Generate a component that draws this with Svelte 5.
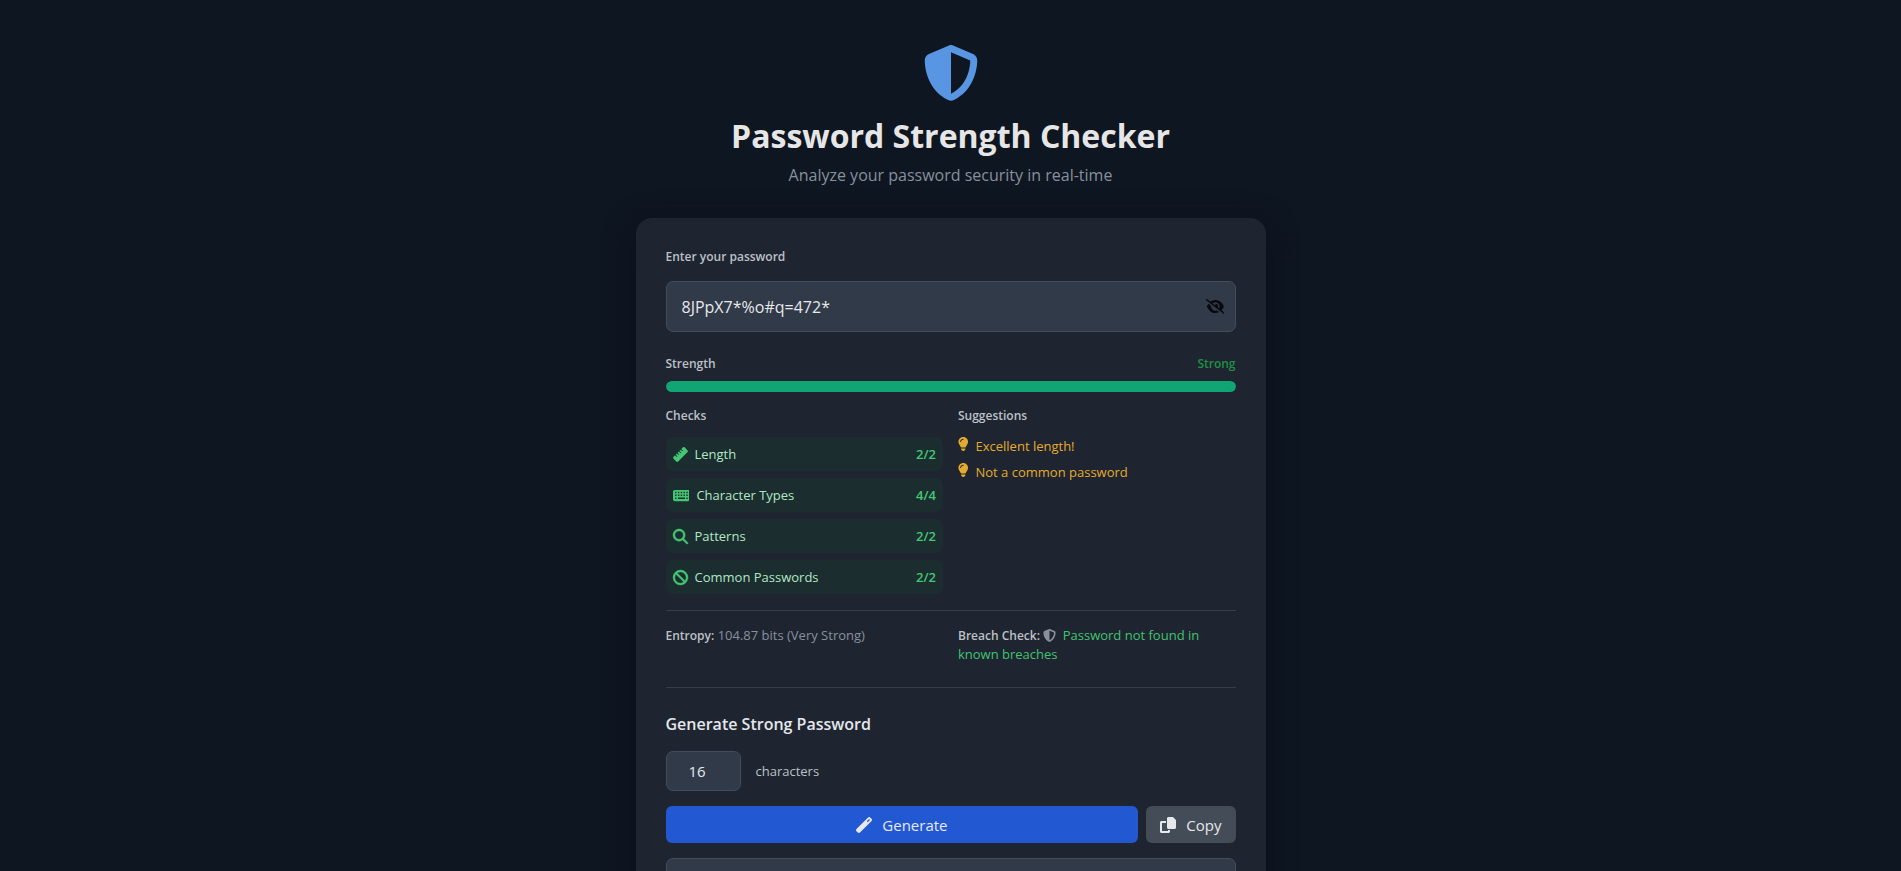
<script>
  let password = $state('8JPpX7*%o#q=472*');
  let length = $state(16);
  let generated = $state('');

  const icons = {
    shield: { w: 512, d: 'M256 0c4.600 0 9.200 1 13.400 2.900L457.700 82.800c22 9.300 38.400 31 38.300 57.200c-.5 99.200-41.300 280.700-213.600 363.200c-16.700 8-36.100 8-52.800 0C57.300 420.700 16.500 239.200 16 140c-.1-26.200 16.300-47.900 38.300-57.200L242.700 2.900C246.800 1 251.400 0 256 0zm0 66.800V444.800C394 378 431.100 230.100 432 141.400L256 66.800z' },
    eye: { w: 640, d: 'M38.800 5.100C28.400-3.100 13.300-1.200 5.100 9.200S-1.200 34.700 9.200 42.900l592 464c10.400 8.200 25.500 6.300 33.700-4.100s6.300-25.500-4.100-33.700L525.600 386.700c39.600-40.600 66.400-86.100 79.900-118.400c3.300-7.900 3.300-16.700 0-24.600c-14.900-35.700-46.200-87.700-93-131.100C465.500 68.800 400.800 32 320 32c-68.200 0-125 26.300-169.300 60.800L38.800 5.100zM223.100 149.500C248.600 126.200 282.700 112 320 112c79.500 0 144 64.500 144 144c0 24.900-6.300 48.300-17.400 68.700L408 294.500c8.400-19.300 10.600-41.400 4.800-63.300c-11.100-41.500-47.800-69.400-88.600-71.100c-5.800-.2-9.200 6.100-7.400 11.700c2.100 6.400 3.300 13.200 3.300 20.300c0 10.200-2.400 19.800-6.600 28.300l-90.300-70.800zM373 389.900c-16.400 6.500-34.300 10.100-53 10.100c-79.500 0-144-64.500-144-144c0-6.900 .5-13.600 1.400-20.200L83.100 161.500C60.300 191.200 44 220.800 34.500 243.700c-3.300 7.900-3.300 16.700 0 24.600c14.900 35.700 46.200 87.700 93 131.100C174.500 443.200 239.200 480 320 480c47.800 0 89.900-12.900 126.200-32.500L373 389.900z' },
    ruler: { w: 512, d: 'M177.900 494.100c-18.700 18.700-49.100 18.700-67.900 0L17.900 401.900c-18.700-18.700-18.700-49.100 0-67.900l50.700-50.700 48 48c6.200 6.200 16.400 6.200 22.600 0s6.200-16.400 0-22.600l-48-48 41.400-41.400 48 48c6.200 6.200 16.400 6.200 22.600 0s6.200-16.400 0-22.600l-48-48 41.400-41.400 48 48c6.200 6.200 16.400 6.200 22.600 0s6.200-16.400 0-22.600l-48-48 41.400-41.400 48 48c6.200 6.200 16.400 6.200 22.600 0s6.200-16.400 0-22.600l-48-48 50.700-50.700c18.700-18.700 49.100-18.700 67.900 0l92.100 92.100c18.700 18.700 18.700 49.100 0 67.900L177.900 494.100z' },
    keyboard: { w: 576, d: 'M64 64C28.700 64 0 92.700 0 128V384c0 35.300 28.700 64 64 64H512c35.300 0 64-28.700 64-64V128c0-35.300-28.700-64-64-64H64zM72 128h48v48H72zM72 224h48v48H72zM72 328h48v48H72zM168 128h48v48h-48zM168 224h48v48h-48zM168 328h240v48H168zM264 128h48v48h-48zM264 224h48v48h-48zM360 128h48v48h-48zM360 224h48v48h-48zM456 128h48v48h-48zM456 224h48v48h-48zM456 328h48v48h-48z' },
    search: { w: 512, d: 'M416 208c0 45.900-14.900 88.300-40 122.700L502.600 457.400c12.500 12.500 12.500 32.800 0 45.300s-32.800 12.500-45.300 0L330.700 376c-34.400 25.200-76.800 40-122.700 40C93.100 416 0 322.900 0 208S93.100 0 208 0S416 93.100 416 208zM208 352a144 144 0 1 0 0-288 144 144 0 1 0 0 288z' },
    ban: { w: 512, d: 'M367.200 412.500L99.500 144.800C77.100 176.100 64 214.500 64 256c0 106 86 192 192 192c41.500 0 79.900-13.100 111.200-35.500zm45.300-45.300C434.900 335.900 448 297.500 448 256c0-106-86-192-192-192c-41.500 0-79.900 13.100-111.200 35.500L412.500 367.200zM0 256a256 256 0 1 1 512 0A256 256 0 1 1 0 256z' },
    bulb: { w: 384, d: 'M272 384c9.600-31.900 29.500-59.100 49.200-86.200c5.200-7.100 10.400-14.200 15.400-21.400c19.800-28.500 31.400-63 31.400-100.300C368 78.800 289.200 0 192 0S16 78.800 16 176c0 37.300 11.600 71.900 31.400 100.300c5 7.200 10.200 14.300 15.400 21.400c19.800 27.100 39.700 54.400 49.200 86.200H272zM192 512c44.200 0 80-35.800 80-80V416H112v16c0 44.200 35.800 80 80 80zM112 176c0 8.800-7.200 16-16 16s-16-7.200-16-16c0-61.900 50.100-112 112-112c8.800 0 16 7.200 16 16s-7.200 16-16 16c-44.200 0-80 35.800-80 80z' },
    wand: { w: 512, d: 'M14 386L386 14c19-19 49-19 68 0l44 44c19 19 19 49 0 68L126 498c-19 19-49 19-68 0l-44-44c-19-19-19-49 0-68zM348 138l26 26 72-72-26-26z' },
    copy: { w: 512, d: 'M272 0H396.100c12.700 0 24.900 5.100 33.900 14.100l67.900 67.900c9 9 14.100 21.200 14.100 33.900V336c0 26.500-21.500 48-48 48H272c-26.500 0-48-21.500-48-48V48c0-26.500 21.500-48 48-48zM48 128H192v64H64V448H256V416h64v48c0 26.500-21.500 48-48 48H48c-26.500 0-48-21.500-48-48V176c0-26.500 21.500-48 48-48z' }
  };

  const checks = [
    { icon: 'ruler', label: 'Length', score: '2/2' },
    { icon: 'keyboard', label: 'Character Types', score: '4/4' },
    { icon: 'search', label: 'Patterns', score: '2/2' },
    { icon: 'ban', label: 'Common Passwords', score: '2/2' }
  ];
  const suggestions = ['Excellent length!', 'Not a common password'];
</script>

{#snippet icon(name)}
  <svg class="icon {name}" viewBox="0 0 {icons[name].w} 512" aria-hidden="true">
    <path fill="currentColor" fill-rule="evenodd" d={icons[name].d} />
  </svg>
{/snippet}

<main>
  <header>
    <div class="logo">{@render icon('shield')}</div>
    <h1>Password Strength Checker</h1>
    <p>Analyze your password security in real-time</p>
  </header>

  <section class="card">
    <label class="caption" for="password">Enter your password</label>
    <div class="field">
      <input id="password" type="text" autocomplete="off" spellcheck="false" bind:value={password} />
      <button class="toggle" type="button" aria-label="Hide password">{@render icon('eye')}</button>
    </div>

    <div class="strength caption"><span>Strength</span><span class="strong">Strong</span></div>
    <div class="track"><div class="fill"></div></div>

    <div class="columns analysis">
      <div>
        <h2 class="caption">Checks</h2>
        <ul class="checks">
          {#each checks as check}
            <li>{@render icon(check.icon)}<span>{check.label}</span><b>{check.score}</b></li>
          {/each}
        </ul>
      </div>
      <div>
        <h2 class="caption">Suggestions</h2>
        <ul class="suggestions">
          {#each suggestions as text}
            <li>{@render icon('bulb')}<span>{text}</span></li>
          {/each}
        </ul>
      </div>
    </div>

    <div class="columns facts">
      <p><b>Entropy:</b> 104.87 bits (Very Strong)</p>
      <p><b>Breach Check:</b> {@render icon('shield')} <span class="safe">Password not found in known breaches</span></p>
    </div>

    <div class="generator">
      <h2>Generate Strong Password</h2>
      <div class="length">
        <input id="length" type="number" min="8" max="64" bind:value={length} />
        <label for="length">characters</label>
      </div>
      <div class="actions">
        <button class="primary" type="button">{@render icon('wand')}Generate</button>
        <button class="secondary" type="button">{@render icon('copy')}Copy</button>
      </div>
      <input class="output" type="text" readonly aria-label="Generated password" value={generated} />
    </div>
  </section>
</main>

<style>
  :global(html) { scrollbar-width: none; }
  :global(body) { background: #0e1621; overflow-x: hidden; }
  :global(*) { box-sizing: border-box; }
  main {
    max-width: 630px;
    margin: 0 auto;
    padding: 45px 0 30px;
    font: 13px/18px "Segoe UI", "Open Sans", "Noto Sans", sans-serif;
    color: #e5e7eb;
  }
  h1, h2, p, ul { margin: 0; padding: 0; }
  ul { list-style: none; }
  .icon { display: block; height: 15px; width: auto; flex: none; }
  header { text-align: center; }
  .logo { color: #5896e3; }
  .logo .icon { height: 56px; margin: 0 auto; }
  h1 { margin-top: 15px; font-size: 32px; line-height: 40px; font-weight: 700; color: #e6e6e6; }
  header p { margin-top: 6px; font-size: 16px; line-height: 26px; color: #88909c; }
  .card { margin-top: 30px; padding: 30px; border-radius: 16px; background: #1e2531; box-shadow: 0 8px 30px #0b111b; }
  .caption { display: block; font-size: 12px; line-height: 18px; font-weight: 600; color: #bcc0c6; }
  input, button { font: inherit; color: #e6e8eb; border: 0; }
  input { border: 1px solid #434c58; border-radius: 7px; background: #313a48; }
  .field { display: grid; grid-template-columns: 1fr 40px; margin-top: 15px; }
  .field input { grid-area: 1 / 1 / 2 / 3; height: 51px; padding: 0 44px 0 15px; font-size: 16px; min-width: 0; }
  .toggle { grid-area: 1 / 2; background: none; color: #07090c; padding: 0 10px; z-index: 1; }
  .strength { display: flex; justify-content: space-between; margin-top: 23px; }
  .strong { color: #1f9048; }
  .track { height: 11px; margin-top: 8px; border-radius: 6px; background: #313a48; overflow: hidden; }
  .fill { height: 100%; border-radius: 6px; background: #10a572; }
  .columns { display: grid; grid-template-columns: 1fr 1fr; gap: 15px; }
  .analysis { margin-top: 15px; }
  .checks { display: grid; gap: 7px; margin-top: 12px; }
  .checks li { display: flex; align-items: center; height: 34px; padding: 0 7px; gap: 7px; border-radius: 7px; background: #1b2d2f; color: #b0e8c4; }
  .checks .icon { color: #44c774; }
  .checks .search, .checks .ban { stroke: currentColor; stroke-width: 14px; overflow: visible; }
  .checks b { margin-left: auto; font-weight: 600; color: #44c774; }
  .suggestions { display: grid; gap: 8px; margin-top: 12px; color: #e4ab2d; }
  .suggestions li { display: flex; gap: 7px; }
  .suggestions .icon { height: 14px; }
  .facts { margin-top: 16px; padding: 15px 0 24px; border-top: 1px solid #353d49; border-bottom: 1px solid #353d49; color: #88909c; }
  .facts b { font-size: 12px; font-weight: 600; color: #bcc0c6; }
  .facts .icon { display: inline-block; height: 13px; vertical-align: -2px; margin-right: 3px; }
  .safe { color: #41c370; }
  .generator h2 { margin-top: 24px; font-size: 16px; line-height: 24px; font-weight: 600; }
  .length { display: flex; align-items: center; gap: 15px; margin-top: 15px; color: #bcc0c6; }
  .length input { width: 75px; height: 40px; padding: 0 8px 0 22px; font-size: 15px; appearance: textfield; }
  .length input::-webkit-inner-spin-button { appearance: none; margin: 0; }
  .actions { display: flex; gap: 8px; margin-top: 15px; }
  .actions button { display: flex; align-items: center; justify-content: center; gap: 10px; height: 37px; padding: 0 14px; border-radius: 6px; font-size: 15px; }
  .actions .icon { height: 16px; }
  .actions .primary { flex: 1; background: #2259d2; }
  .actions .secondary { background: #444d57; }
  .output { display: block; width: 100%; height: 45px; margin-top: 15px; padding: 0 15px; font-size: 15px; }
</style>
